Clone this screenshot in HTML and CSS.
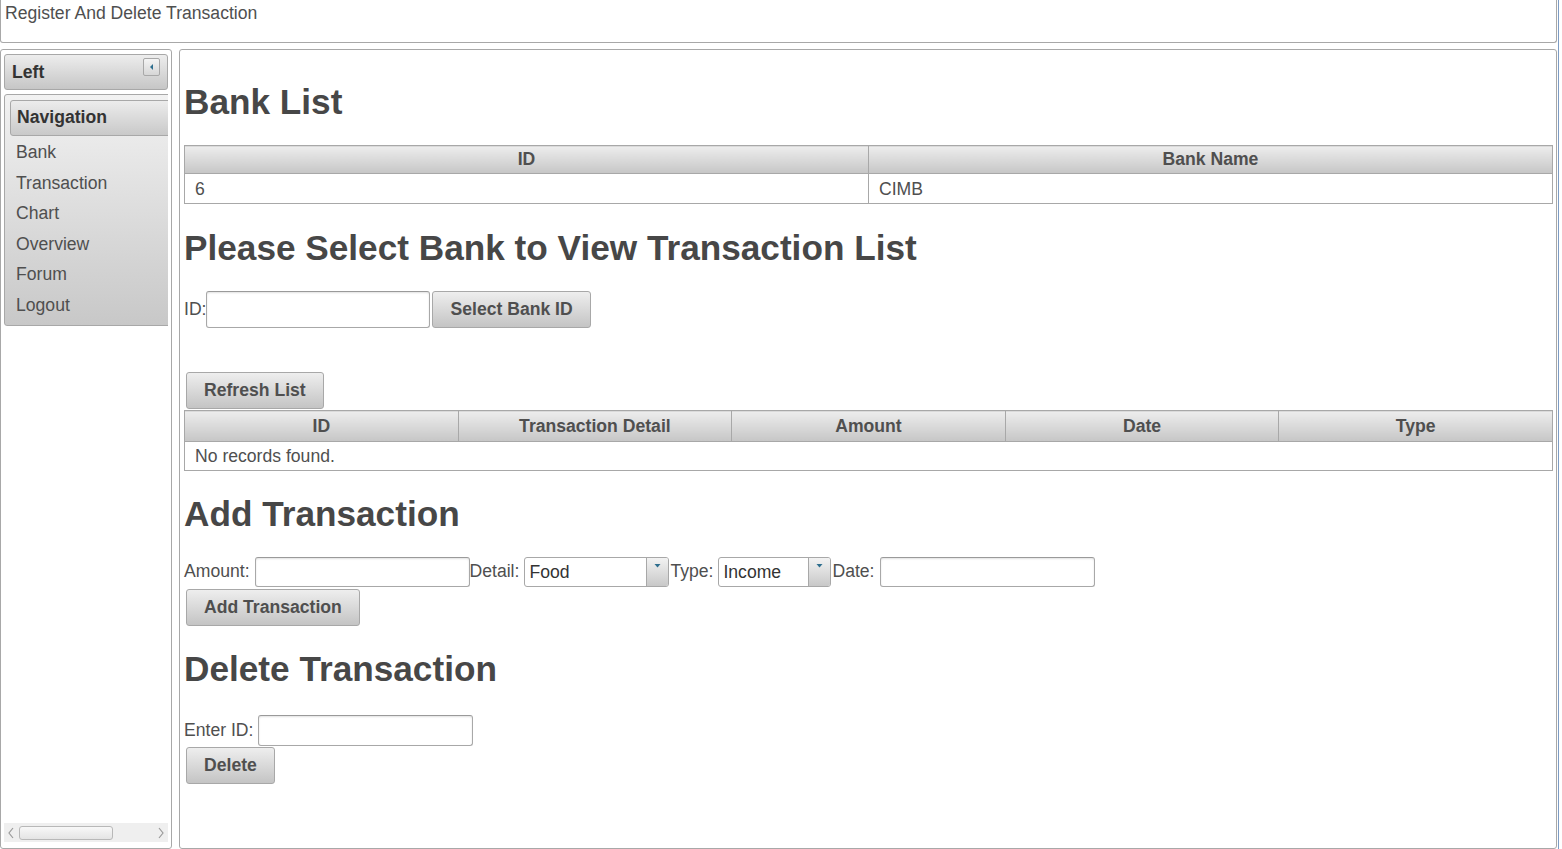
FILE: index.html
```html
<!DOCTYPE html>
<html>
<head>
<meta charset="utf-8">
<title>Register And Delete Transaction</title>
<link rel="stylesheet" href="styles.css">
</head>
<body>
<div class="app">
  <header class="north">Register And Delete Transaction</header>
  <div class="main">
    <aside class="west">
      <div class="unit-header">
        <span class="unit-title">Left</span>
        <span class="collapse"><svg width="7" height="8" viewBox="0 0 7 8"><path d="M5 1 L2 4 L5 7 Z" fill="#2e6e8e"/></svg></span>
      </div>
      <div class="west-body">
        <div class="west-scroll">
          <nav class="menu">
            <div class="menu-head">Navigation</div>
            <a class="menu-item">Bank</a>
            <a class="menu-item">Transaction</a>
            <a class="menu-item">Chart</a>
            <a class="menu-item">Overview</a>
            <a class="menu-item">Forum</a>
            <a class="menu-item">Logout</a>
          </nav>
        </div>
        <div class="hscroll">
          <svg class="arrow" width="8" height="12" viewBox="0 0 8 12"><path d="M6 1 L2 6 L6 11" fill="none" stroke="#9a9a9a" stroke-width="1.2"/></svg>
          <div class="thumb-track"><div class="thumb"></div></div>
          <svg class="arrow" width="8" height="12" viewBox="0 0 8 12"><path d="M2 1 L6 6 L2 11" fill="none" stroke="#9a9a9a" stroke-width="1.2"/></svg>
        </div>
      </div>
    </aside>
    <main class="center">
      <h1>Bank List</h1>
      <table class="grid two">
        <thead><tr><th>ID</th><th>Bank Name</th></tr></thead>
        <tbody><tr><td>6</td><td>CIMB</td></tr></tbody>
      </table>

      <h1>Please Select Bank to View Transaction List</h1>
      <div class="form-line">
        <span class="lbl tight">ID:</span>
        <input class="txt id-input" type="text">
        <button class="btn">Select Bank ID</button>
      </div>

      <div class="refresh-wrap"><button class="btn">Refresh List</button></div>
      <table class="grid five">
        <thead><tr><th>ID</th><th>Transaction Detail</th><th>Amount</th><th>Date</th><th>Type</th></tr></thead>
        <tbody><tr><td colspan="5">No records found.</td></tr></tbody>
      </table>

      <h1 class="h-add">Add Transaction</h1>
      <div class="form-line">
        <span class="lbl">Amount:</span>
        <input class="txt w215" type="text">
        <span class="lbl">Detail:</span>
        <div class="select w144"><span class="sel-label">Food</span><span class="trigger"><svg width="7" height="4" viewBox="0 0 7 4"><path d="M0.5 0 L6.5 0 L3.5 3.5 Z" fill="#2e6e8e"/></svg></span></div>
        <span class="lbl">Type:</span>
        <div class="select w112"><span class="sel-label">Income</span><span class="trigger"><svg width="7" height="4" viewBox="0 0 7 4"><path d="M0.5 0 L6.5 0 L3.5 3.5 Z" fill="#2e6e8e"/></svg></span></div>
        <span class="lbl">Date:</span>
        <input class="txt w215" type="text">
      </div>
      <div class="btn-line"><button class="btn">Add Transaction</button></div>

      <h1 class="h-del">Delete Transaction</h1>
      <div class="form-line">
        <span class="lbl">Enter ID:</span>
        <input class="txt w215 h31" type="text">
      </div>
      <div class="btn-line del"><button class="btn">Delete</button></div>
    </main>
  </div>
</div>
<div class="edge"></div>
</body>
</html>
```
FILE: styles.css
```css
html, body {
  margin: 0;
  padding: 0;
  background: #ffffff;
}
body {
  display: flex;
  height: 849px;
  overflow: hidden;
  font-family: "Liberation Sans", Arial, sans-serif;
  font-size: 17.6px;
  color: #4f4f4f;
}
.app {
  width: 1557px;
  display: flex;
  flex-direction: column;
}
.edge {
  width: 1px;
  margin-left: 1px;
  background: #7d9cc4;
}
.north {
  border: 1px solid #a8a8a8;
  border-top: none;
  border-radius: 0 0 3px 3px;
  padding: 3px 0 0 4px;
  box-sizing: border-box;
  height: 43px;
  line-height: 20px;
  color: #4f4f4f;
}
.main {
  flex: 1;
  display: flex;
  margin-top: 6px;
  gap: 7px;
  min-height: 0;
}
.west {
  width: 172px;
  box-sizing: border-box;
  border: 1px solid #a8a8a8;
  border-radius: 3px;
  padding: 4px 3px 5px 3px;
  display: flex;
  flex-direction: column;
}
.unit-header {
  height: 36px;
  box-sizing: border-box;
  border: 1px solid #a8a8a8;
  border-radius: 3px;
  background: linear-gradient(#ededed, #c6c6c6);
  display: flex;
  align-items: flex-start;
  padding: 0 7px;
}
.unit-title {
  font-weight: bold;
  line-height: 34px;
  color: #333;
}
.collapse {
  margin-left: auto;
  margin-top: 3px;
  width: 17px;
  height: 18px;
  box-sizing: border-box;
  border: 1px solid #a8a8a8;
  border-radius: 2px;
  background: linear-gradient(#f4f4f4, #d6d6d6);
  display: flex;
  align-items: center;
  justify-content: center;
}
.west-body {
  flex: 1;
  display: flex;
  flex-direction: column;
  margin-top: 4px;
  min-height: 0;
}
.west-scroll {
  flex: 1;
  overflow: hidden;
}
.menu {
  width: 240px;
  box-sizing: border-box;
  border: 1px solid #a8a8a8;
  border-radius: 3px;
  background: linear-gradient(#f2f2f2, #c8c8c8);
  padding: 5px;
}
.menu-head {
  height: 36px;
  box-sizing: border-box;
  border: 1px solid #a8a8a8;
  border-radius: 3px;
  background: linear-gradient(#ececec, #c9c9c9);
  font-weight: bold;
  line-height: 33px;
  padding-left: 6px;
  color: #333;
}
.menu-item {
  display: block;
  padding: 6px 6px 4px;
  line-height: 20.6px;
  color: #4f4f4f;
}
.hscroll {
  height: 19px;
  background: #efefef;
  display: flex;
  align-items: center;
  padding: 0 3px;
  margin-bottom: 1px;
}
.arrow {
  flex: none;
}
.thumb-track {
  flex: 1;
  padding: 0 8px 0 4px;
}
.thumb {
  width: 94px;
  height: 14px;
  box-sizing: border-box;
  border: 1px solid #b8b8b8;
  border-radius: 3px;
  background: linear-gradient(#f8f8f8, #e4e4e4);
}
.center {
  flex: 1;
  box-sizing: border-box;
  border: 1px solid #a8a8a8;
  border-radius: 3px;
  padding: 8px 3px 0 4px;
  min-width: 0;
}
h1 {
  font-size: 35.2px;
  font-weight: bold;
  margin: 23.6px 0;
  line-height: normal;
  color: #474747;
}
h1.h-add {
  margin-top: 22.4px;
  margin-bottom: 22.8px;
}
h1.h-del {
  margin-top: 22.8px;
  margin-bottom: 25.4px;
}
.grid {
  width: 100%;
  border-collapse: collapse;
  table-layout: fixed;
}
.grid th {
  border: 1px solid #a8a8a8;
  background: linear-gradient(#ededed, #c6c6c6);
  font-weight: bold;
  text-align: center;
  padding: 3px 10px 3px;
  line-height: 21px;
  color: #4f4f4f;
}
.grid td {
  border: 1px solid #a8a8a8;
  padding: 4px 10px 3px;
  line-height: 22px;
  color: #4f4f4f;
}
.grid.five th {
  padding-top: 5px;
  padding-bottom: 4px;
}
.grid.five td {
  line-height: 21px;
}
.form-line {
  display: flex;
  align-items: center;
}
.lbl {
  margin-right: 5px;
  white-space: nowrap;
}
.lbl.tight {
  margin-right: 0;
}
.txt {
  box-sizing: border-box;
  height: 30px;
  border: 1px solid #a8a8a8;
  border-top-color: #9a9a9a;
  border-radius: 3px;
  box-shadow: inset 0 1px 2px rgba(0,0,0,0.12);
  background: #fff;
  font-family: inherit;
  font-size: 17.6px;
  padding: 0 4px;
  margin: 0;
}
.id-input {
  width: 224px;
  height: 37px;
  margin-right: 2px;
}
.w215 { width: 215px; }
.h31 { height: 31px; }
.select {
  box-sizing: border-box;
  height: 30px;
  border: 1px solid #a8a8a8;
  border-radius: 3px;
  background: #fff;
  display: flex;
  margin-right: 1px;
  overflow: hidden;
}
.w144 { width: 145px; }
.w112 { width: 113px; }
.sel-label {
  flex: 1;
  padding-left: 4px;
  line-height: 28px;
  color: #333;
}
.trigger {
  width: 22px;
  border-left: 1px solid #a8a8a8;
  background: linear-gradient(#f2f2f2, #c8c8c8);
  display: flex;
  justify-content: center;
  align-items: flex-start;
  padding-top: 6px;
  box-sizing: border-box;
}
.btn {
  box-sizing: border-box;
  height: 37px;
  border: 1px solid #a8a8a8;
  border-radius: 3px;
  background: linear-gradient(#eeeeee, #c4c4c4);
  font-family: inherit;
  font-size: 17.6px;
  font-weight: bold;
  color: #4f4f4f;
  padding: 0 17px;
  margin: 0;
  line-height: 35px;
}
.refresh-wrap {
  margin-top: 44px;
  padding-left: 2px;
  height: 38px;
}
.btn-line {
  padding-left: 2px;
  margin-top: 2px;
  height: 38px;
}
.btn-line.del {
  margin-top: 1px;
}
```
